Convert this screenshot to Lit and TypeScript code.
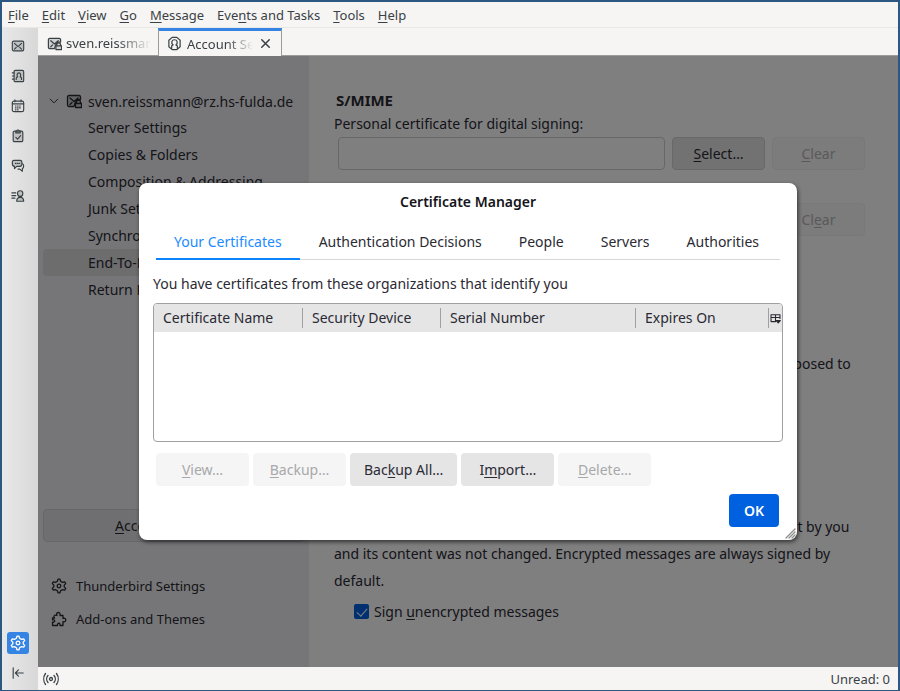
import { LitElement, html, css, svg, TemplateResult } from "lit";
import { customElement, state } from "lit/decorators.js";
import { classMap } from "lit/directives/class-map.js";

const icon = (body: TemplateResult, cls = "icon") =>
  html`<svg class=${cls} viewBox="0 0 16 16" aria-hidden="true">${body}</svg>`;

const icons = {
  mail: svg`<rect class="tint" x="1.500" y="2.500" width="13" height="11" rx="1.500"/><path d="m4 5 4 3.800L12 5M4 11.500l2-2M12 11.500l-2-2"/>`,
  book: svg`<rect class="tint" x="3.500" y="1.500" width="11" height="13" rx="1.500"/><path d="M1.500 4.500h2M1.500 8h2M1.500 11.500h2M6 12v-1.500c0-.8.5-1.200 1.500-1.500C6.500 7 6.800 4.500 9 4.500S11.500 7 10.500 9c1 .3 1.500.7 1.500 1.500V12"/>`,
  calendar: svg`<rect x="1.500" y="2.500" width="13" height="12" rx="2"/><path d="M1.500 5.500h13M4.500 1v2M11.500 1v2"/><path class="dots" d="M5 8h7M5 10.200h7M5 12.400h4"/>`,
  tasks: svg`<rect class="tint" x="2.500" y="2.500" width="11" height="12" rx="1.500"/><path class="tint" d="M5.500 4.500v-2L8 1l2.500 1.500v2z"/><path d="m5.500 9.500 2 2L11 7.500"/>`,
  chat: svg`<path d="M13 5.500c1.300.3 1.500 1 1.500 2.500s-.5 2.500-1.500 3v3l-3-2.500H8"/><path class="tint" d="M3.500 1.500h7c1.500 0 2 1 2 3s-.5 4-2 4h-4L4 11V8.500c-2 0-2.500-1.500-2.500-4s.5-3 2-3z"/><path class="dots" d="M5 5h5"/>`,
  spaces: svg`<path d="M1 4.500h4.500M1 7.500h4.500M1 10.500h3.500"/><path class="tint" d="M10.500 2c2 0 3 1.200 3 3s-1 3.500-3 3.500-3-1.700-3-3.500 1-3 3-3zM6.500 14c0-3 1.200-4.500 4-4.500s4 1.500 4 4.500z"/>`,
  gear: svg`<path d="M6.400 3.300 7 1.200h2l.6 2.100 1.900 1.100 2.200-.6 1 1.800L13.200 7.100v1.800l1.500 1.500-1 1.800-2.200-.6-1.900 1.100-.6 2.100H7l-.6-2.100-1.900-1.100-2.200.6-1-1.800L2.800 8.900V7.100L1.300 5.600l1-1.800 2.200.6z"/><circle cx="8" cy="8" r="1.800"/>`,
  collapse: svg`<path d="M2.500 2v12M14 8H5M8.500 4.500 5 8l3.500 3.500"/>`,
  mailLock: svg`<path class="tint" d="M8 13.500H3A1.500 1.500 0 0 1 1.500 12V4A1.500 1.500 0 0 1 3 2.500h10A1.500 1.500 0 0 1 14.500 4v2.500H11L9 10z"/><path d="m4 5 4 3.500L12 5M4 11.500l2-2"/><path class="tint" d="M9.500 10.500h6v4h-6zM10.500 10.500V9c0-2.300 4-2.300 4 0v1.500"/>`,
  account: svg`<path d="M5.500 1.500h5l3.500 3v7l-3.500 3h-5L2 11.500v-7zM5 13v-2.500l1.500-1C4 7.500 5 4 8 4s4 3.500 1.500 5.500l1.500 1V13"/>`,
  close: svg`<path class="bold" d="m4 4 8 8M12 4l-8 8"/>`,
  chevron: svg`<path d="m3 5.500 5 5 5-5"/>`,
  puzzle: svg`<path d="M6 4.500C4 1 10 0 9 4.500h3v3c3.700-1.500 3.700 4.500 0 3.200v3.800H9c.6-3-3-3-2.500 0h-5v-3.300c3 .6 3-2.900 0-2.400V7h2c-1.500-2 0-3.500 2.500-2.500z"/>`,
  online: svg`<circle cx="8" cy="8" r="1.500"/><path d="M5 4.500c-1.800 2-1.800 5 0 7M11 4.500c1.800 2 1.800 5 0 7M2.500 2.500c-2.300 3.200-2.300 7.800 0 11M13.500 2.500c2.300 3.200 2.300 7.800 0 11"/>`,
  picker: svg`<path d="M1.500 2.500h13V8M8 12.500H1.500v-10M1.500 6.500h13M8 2.500v10"/><path class="solid" d="M9 11h6l-3 3.500z"/>`,
};

/** Wraps the access key, marked by "_" before it, in an underline. */
const keyed = (text: string) => {
  const at = text.indexOf("_");
  return at < 0
    ? html`${text}`
    : html`${text.slice(0, at)}<u>${text[at + 1]}</u>${text.slice(at + 2)}`;
};

const shared = css`
  * { box-sizing: border-box; }
  button, input { font: inherit; color: inherit; margin: 0; }
  button { border: 0; padding: 0; background: none; white-space: nowrap; }
  u { text-decoration-thickness: 1px; text-underline-offset: 2px; text-decoration-skip-ink: none; }
  svg { fill: none; stroke: currentColor; stroke-width: 1.3; stroke-linejoin: round; stroke-linecap: round; }
  .icon { width: 16px; height: 16px; flex: none; display: block; }
  .tint { fill: rgba(90, 100, 105, 0.25); }
  .dots { stroke-dasharray: 0.8 1.6; }
  .bold { stroke-width: 1.6; }
  .solid { fill: currentColor; }
  .push {
    height: 33px;
    min-width: 93px;
    padding: 0 14px;
    border-radius: 4px;
    background: #e5e5e6;
  }
  .push:disabled { background: #f5f5f5; color: #a8a8aa; }
`;

@customElement("certificate-manager")
class CertificateManager extends LitElement {
  @state() private tab = 0;

  static styles = [shared, css`
    :host { display: block; width: 658px; max-width: 100%; }
    .dialog {
      position: relative;
      padding: 7px 14px 13px;
      border-radius: 8px;
      background: #fff;
      color: #2b2a33;
      box-shadow: 1px 2px 4px rgba(0, 0, 0, 0.6);
    }
    h2 { margin: 0; font-size: 14px; font-weight: 600; line-height: 24px; text-align: center; color: #15141a; }
    .tabs { display: flex; gap: 1px; margin: 9px 3px 0; border-bottom: 1px solid #d8d8dc; }
    .tab { height: 37px; padding: 2px 18px 0; border-bottom: 2px solid transparent; margin-bottom: -1px; }
    .tab.on { color: #1a8cff; border-color: #0a84ff; }
    p { margin: 13px 0 8px; line-height: 22px; }
    .list { height: 139px; border: 1px solid #a0a0a2; border-radius: 4px; overflow: hidden; }
    table { width: 100%; table-layout: fixed; border-collapse: collapse; }
    th { height: 28px; padding: 0; text-align: left; font-weight: 400; background: #e5e5e6; }
    th span { display: block; padding-left: 9px; line-height: 20px; border-right: 1px solid #a0a0a2; }
    .name { width: 149px; }
    .device { width: 138px; }
    .serial { width: 195px; }
    .pick { width: 13px; }
    .pick .icon { width: 11px; height: 11px; stroke-width: 1.6; margin-left: 1px; }
    .actions { display: flex; gap: 4px; padding: 11px 3px 0; }
    .footer { display: flex; justify-content: flex-end; padding: 8px 4px 0; }
    .ok { height: 33px; width: 50px; border-radius: 4px; background: #0061e0; color: #fff; font-weight: 600; }
    .grip { position: absolute; right: 1px; bottom: 1px; width: 11px; height: 11px; color: #8c8c8c; }
  `];

  render() {
    const tabs = ["Your Certificates", "Authentication Decisions", "People", "Servers", "Authorities"];
    const actions: [string, boolean][] = [
      ["_View…", false], ["_Backup…", false], ["Bac_kup All…", true], ["I_mport…", true], ["_Delete…", false],
    ];
    return html`
      <div class="dialog" role="dialog" aria-labelledby="title">
        <h2 id="title">Certificate Manager</h2>
        <div class="tabs" role="tablist">
          ${tabs.map((t, i) => html`<button role="tab" aria-selected=${i === this.tab}
            class=${classMap({ tab: true, on: i === this.tab })} @click=${() => (this.tab = i)}>${t}</button>`)}
        </div>
        <p>You have certificates from these organizations that identify you</p>
        <div class="list">
          <table>
            <thead><tr>
              <th class="name"><span>Certificate Name</span></th>
              <th class="device"><span>Security Device</span></th>
              <th class="serial"><span>Serial Number</span></th>
              <th><span>Expires On</span></th>
              <th class="pick"><button aria-label="Select columns to display">${icon(icons.picker)}</button></th>
            </tr></thead>
          </table>
        </div>
        <div class="actions">
          ${actions.map(([t, on]) => html`<button class="push" ?disabled=${!on}>${keyed(t)}</button>`)}
        </div>
        <div class="footer"><button class="ok">OK</button></div>
        <svg class="grip" viewBox="0 0 11 11" aria-hidden="true"><path d="M1 10 10 1M4 10l6-6M7 10l3-3"/></svg>
      </div>`;
  }
}

@customElement("account-settings")
class AccountSettings extends LitElement {
  static styles = [shared, css`
    :host { display: flex; flex: 1; min-height: 0; color: #2b2a33; background: #fff; }
    .side { width: 271px; flex: none; display: flex; flex-direction: column; background: #ededf0; padding: 32px 5px 0; }
    .tree { flex: 1; margin: 0; padding: 0; list-style: none; line-height: 27px; }
    .tree a { display: block; padding-left: 45px; border-radius: 4px; color: inherit; text-decoration: none; white-space: nowrap; }
    .tree a.root { display: flex; align-items: center; gap: 6px; height: 26px; padding-left: 5px; }
    .root .chevron { width: 12px; height: 12px; }
    .tree a.on { background: #dadadd; }
    .accounts { height: 33px; padding-right: 12px; border: 1px solid #cfcfd2; border-radius: 4px; background: #dfdfe2; }
    .links { padding: 27px 8px 32px; font-size: 13px; }
    .links a { display: flex; align-items: center; gap: 9px; height: 33px; color: inherit; text-decoration: none; }
    .main { flex: 1; min-width: 0; padding: 32px 33px 0 25px; }
    h2 { margin: 0; padding-left: 2px; font-size: 15px; line-height: 24px; }
    .field-label { display: block; line-height: 24px; }
    .row { display: flex; gap: 7px; padding: 1px 0 8px 4px; }
    .row input { flex: 1; min-width: 0; height: 33px; border: 1px solid #cfcfd2; border-radius: 4px; background: transparent; }
    .row .push { border: 1px solid #d0d0d2; }
    .row .push:disabled { border-color: #f0f0f0; color: #b4b4b6; background: #f8f8f8; }
    .manage { padding-bottom: 34px; }
    p { margin: 0; line-height: 27px; }
    .intro { padding-top: 56px; }
    .choices { display: grid; padding: 8px 0 47px 20px; line-height: 27px; }
    .choices label, .check { display: flex; align-items: center; gap: 5px; }
    .choices input { accent-color: #0061e0; }
    .check { padding: 4px 0 0 20px; line-height: 27px; }
    .check input {
      appearance: none; width: 15px; height: 15px; border-radius: 2px;
      background: #0061e0; display: grid; place-items: center;
    }
    .check input:checked::before {
      content: ""; width: 5px; height: 9px; margin-top: -2px;
      border: solid #fff; border-width: 0 1px 1px 0; transform: rotate(42deg);
    }
  `];

  render() {
    const pages = ["Server Settings", "Copies & Folders", "Composition & Addressing", "Junk Settings",
      "Synchronization & Storage", "End-To-End Encryption", "Return Receipts"];
    return html`
      <nav class="side">
        <ul class="tree">
          <li><a class="root" href="#account">${icon(icons.chevron, "icon chevron")}${icon(icons.mailLock)}
            sven.reissmann@rz.hs-fulda.de</a></li>
          ${pages.map((p) => html`<li><a class=${classMap({ on: p.startsWith("End") })} href="#page">${p}</a></li>`)}
        </ul>
        <button class="accounts">${keyed("_Account Actions")}</button>
        <div class="links">
          <a href="#settings">${icon(icons.gear)}Thunderbird Settings</a>
          <a href="#addons">${icon(icons.puzzle)}Add-ons and Themes</a>
        </div>
      </nav>
      <section class="main">
        <h2>S/MIME</h2>
        <label class="field-label" for="sign-cert">Personal certificate for digital signing:</label>
        <div class="row">
          <input id="sign-cert" type="text" readonly>
          <button class="push">${keyed("_Select…")}</button>
          <button class="push" disabled>${keyed("_Clear")}</button>
        </div>
        <label class="field-label" for="enc-cert">Personal certificate for encryption:</label>
        <div class="row manage">
          <input id="enc-cert" type="text" readonly>
          <button class="push">${keyed("Selec_t…")}</button>
          <button class="push" disabled>${keyed("Cl_ear")}</button>
        </div>
        <h2>Sending Messages</h2>
        <p class="intro">Without end-to-end encryption the contents of messages are easily exposed to your email provider and to mass surveillance.</p>
        <div class="choices">
          <label><input type="radio" name="enc" checked>Do not enable encryption by default</label>
          <label><input type="radio" name="enc">Require encryption by default</label>
        </div>
        <p>A digital signature allows recipients to verify that the message was sent by you and its content was not changed. Encrypted messages are always signed by default.</p>
        <label class="check"><input type="checkbox" checked><span>${keyed("Sign _unencrypted messages")}</span></label>
      </section>`;
  }
}

@customElement("app-root")
class AppRoot extends LitElement {
  static styles = [shared, css`
    :host {
      display: flex;
      flex-direction: column;
      box-sizing: border-box;
      min-height: 100vh;
      border: solid #2b5780;
      border-width: 2px 2px 1px;
      background: #f6f5f4;
      color: #3a4145;
      font: 14px "Noto Sans", sans-serif;
    }
    .menu { display: flex; gap: 13px; height: 26px; padding: 0 6px; border-bottom: 1px solid #e9e8e6; font-size: 13px; }
    .body { flex: 1; display: flex; }
    .spaces {
      width: 36px; flex: none; display: flex; flex-direction: column; align-items: center;
      padding: 7px 4px 6px 0; gap: 8px; background: linear-gradient(90deg, #e8e8e8, #d8d8d8);
    }
    .space { width: 22px; height: 22px; border-radius: 3px; display: grid; place-items: center; }
    .space .icon { width: 14px; height: 14px; }
    .space.on { margin-top: auto; background: #3584e4; color: #fff; }
    .space.on .icon { width: 16px; height: 16px; }
    .column { flex: 1; min-width: 0; display: flex; flex-direction: column; }
    .tabs { display: flex; height: 28px; border-bottom: 1px solid #9b9b9b; font-size: 13px; }
    .tab { display: flex; align-items: center; gap: 4px; width: 120px; padding: 3px 7px 0 9px; }
    .tab .icon { width: 15px; height: 15px; }
    .tab .label { flex: 1; overflow: hidden; text-align: left; mask-image: linear-gradient(90deg, #000 60%, transparent); }
    .tab.on {
      width: 124px; margin-bottom: -1px; padding: 0 8px; gap: 5px; background: #f6f5f4;
      border: solid #9b9b9b; border-width: 0 1px; border-top: 3px solid #3584e4;
    }
    .stage { position: relative; flex: 1; display: flex; }
    .overlay {
      position: absolute; inset: 0; display: flex; align-items: center; justify-content: center;
      background: rgba(0, 0, 0, 0.5);
    }
    .status { display: flex; align-items: center; justify-content: space-between; height: 23px; padding: 0 8px 0 5px; font-size: 13px; }
  `];

  render() {
    const menus = ["_File", "_Edit", "_View", "_Go", "_Message", "Eve_nts and Tasks", "_Tools", "_Help"];
    const spaces: [string, TemplateResult][] = [
      ["Mail", icons.mail], ["Address Book", icons.book], ["Calendar", icons.calendar],
      ["Tasks", icons.tasks], ["Chat", icons.chat], ["Contacts", icons.spaces],
    ];
    return html`
      <nav class="menu">${menus.map((m) => html`<button>${keyed(m)}</button>`)}</nav>
      <div class="body">
        <nav class="spaces">
          ${spaces.map(([name, art]) => html`<button class="space" aria-label=${name}>${icon(art)}</button>`)}
          <button class="space on" aria-label="Settings">${icon(icons.gear)}</button>
          <button class="space" aria-label="Collapse">${icon(icons.collapse)}</button>
        </nav>
        <div class="column">
          <div class="tabs">
            <div class="tab">${icon(icons.mailLock)}<button class="label">sven.reissmann@rz</button></div>
            <div class="tab on">${icon(icons.account)}<button class="label">Account Settings</button>
              <button aria-label="Close tab">${icon(icons.close)}</button></div>
          </div>
          <div class="stage">
            <account-settings></account-settings>
            <div class="overlay"><certificate-manager></certificate-manager></div>
          </div>
          <footer class="status">${icon(icons.online)}<span>Unread: 0</span></footer>
        </div>
      </div>`;
  }
}
